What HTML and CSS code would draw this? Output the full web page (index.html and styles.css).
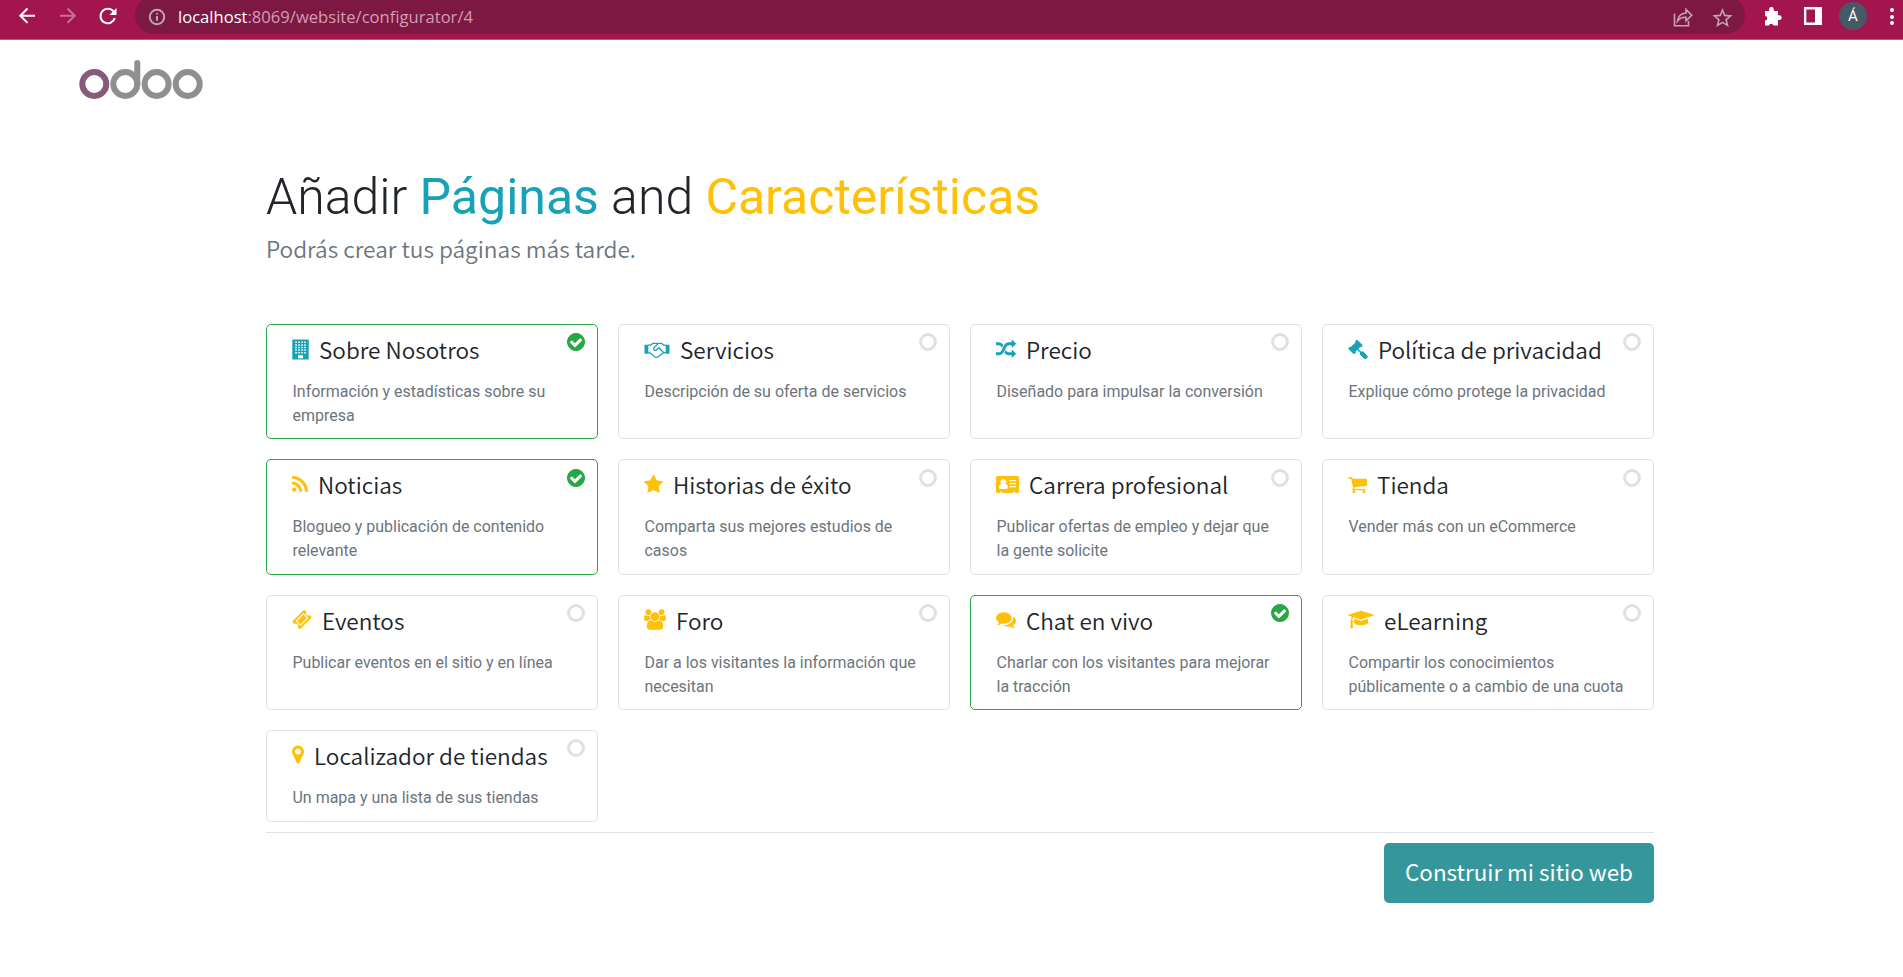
FILE: index.html
```html
<!DOCTYPE html>
<html lang="es">
<head>
<meta charset="utf-8">
<title>Odoo</title>
<link rel="stylesheet" href="styles.css">
</head>
<body>
<svg class="sprite" aria-hidden="true">
  <symbol id="building" viewBox="0 0 17 21"><path d="M.3.500h16.400v20H.3z"/><path fill="none" stroke="#fff" stroke-opacity=".85" stroke-width="1.500" stroke-dasharray="1.900 1.100" d="M3.100 3.300h11M3.100 5.900h11M3.100 8.500h11M3.100 11.100h11M3.100 13.700h11"/><path fill="#fff" d="M6 16.300h5v3H6z"/></symbol>
  <symbol id="handshake" viewBox="0 0 27 20"><path d="M.5 5h4v9.500h-4zM22.500 5h4v9.500h-4z"/><path fill="none" stroke="currentColor" stroke-width="1.300" stroke-linejoin="round" stroke-linecap="round" d="M4.500 5.500h2.300L9 3.700h9.500l2 1.800h2M4.500 13.500h2l4.300 4q1.800 1.300 3.500.2l6-4.500h2.200M14.500 4.200l-4.300 4q-.8 1.600.5 2.500 1.400.7 2.500-.4l2.300-2.100 4.600 4.600"/></symbol>
  <symbol id="random" viewBox="0 0 1792 1792"><path d="M666 481q-60 92-137 273-22-45-37-72.500t-40.500-63.500-51-56.500-63-35-81.500-14.500h-224q-14 0-23-9t-9-23v-192q0-14 9-23t23-9h224q250 0 410 225zm1126 799q0 14-9 23l-320 320q-9 9-23 9-13 0-22.500-9.500t-9.500-22.500v-192q-32 0-85 .5t-81 1-73-1-71-5-64-10.500-63-18.500-58-28.500-59-40-55-53.500-56-69.500q59-93 136-273 22 45 37 72.500t40.500 63.500 51 56.500 63 35 81.500 14.500h256v-192q0-14 9-23t23-9q12 0 24 10l319 319q9 9 9 23zm0-896q0 14-9 23l-320 320q-9 9-23 9-13 0-22.500-9.500t-9.500-22.500v-192h-256q-48 0-87 15t-69 45-51 61.500-45 77.500q-32 62-78 171-29 66-49.500 111t-54 105-64 100-74 83-90 68.500-106.500 42-128 16.500h-224q-14 0-23-9t-9-23v-192q0-14 9-23t23-9h224q48 0 87-15t69-45 51-61.500 45-77.500q32-62 78-171 29-66 49.500-111t54-105 64-100 74-83 90-68.500 106.500-42 128-16.500h256v-192q0-14 9-23t23-9q12 0 24 10l319 319q9 9 9 23z"/></symbol>
  <symbol id="gavel" viewBox="0 0 1792 1792"><path d="M1771 1536q0 53-37 90l-107 108q-39 37-91 37-53 0-90-37l-363-364q-38-36-38-90 0-53 43-96l-256-256-126 126q-14 14-34 14t-34-14q2 2 12.500 12t12.500 13 10 11.500 10 13.500 6 13.500 5.500 16.500 1.500 18q0 38-28 68-3 3-16.500 18t-19 20.500-18.500 16.500-22 15.500-22 9-26 4.500q-40 0-68-28l-408-408q-28-28-28-68 0-13 4.500-26t9-22 15.500-22 16.500-18.500 20.500-19 18-16.500q30-28 68-28 10 0 18 1.500t16.500 5.500 13.500 6 13.500 10 11.500 10 13 12.500 12 12.500q-14-14-14-34t14-34l348-348q14-14 34-14t34 14q-2-2-12.500-12t-12.500-13-10-11.500-10-13.500-6-13.500-5.500-16.500-1.500-18q0-38 28-68 3-3 16.500-18t19-20.500 18.500-16.500 22-15.500 22-9 26-4.500q40 0 68 28l408 408q28 28 28 68 0 13-4.500 26t-9 22-15.500 22-16.500 18.500-20.500 19-18 16.500q-30 28-68 28-10 0-18-1.500t-16.500-5.500-13.500-6-13.500-10-11.500-10-13-12.500-12-12.500q14 14 14 34t-14 34l-126 126 256 256q43-43 96-43 52 0 91 37l363 363q37 39 37 91z"/></symbol>
  <symbol id="rss" viewBox="192 0 1408 1792"><path d="M576 1344q0 80-56 136t-136 56-136-56-56-136 56-136 136-56 136 56 56 136zm512 123q2 28-17 48-18 21-47 21h-135q-25 0-43-16.500t-20-41.500q-22-229-184.500-391.500t-391.500-184.500q-25-2-41.500-20t-16.500-43v-135q0-29 21-47 17-17 43-17h5q160 13 306 80.500t259 181.500q114 113 181.500 259t80.500 306zm512 2q2 27-18 47-18 20-46 20h-143q-26 0-44.500-17.500t-19.500-42.500q-12-215-101-408.500t-231.500-336-336-231.500-408.500-102q-25-1-42.500-19.500t-17.500-43.500v-143q0-28 20-46 18-18 44-18h3q262 13 501.500 120t425.500 294q187 186 294 425.500t120 501.500z"/></symbol>
  <symbol id="star" viewBox="64 0 1664 1792"><path d="M1728 647q0 22-26 48l-363 354 86 500q1 7 1 20 0 21-10.500 35.500t-30.500 14.500q-19 0-40-12l-449-236-449 236q-22 12-40 12-21 0-31.500-14.500t-10.500-35.500q0-6 2-20l86-500-364-354q-25-27-25-48 0-37 56-46l502-73 225-455q19-41 49-41t49 41l225 455 502 73q56 9 56 46z"/></symbol>
  <symbol id="idcard" viewBox="0 0 23 20"><path fill-rule="evenodd" d="M1.500 1.500h20q1.500 0 1.500 1.500v14q0 1.500-1.500 1.500h-2.300v-1.200h-2.400v1.200H6.200v-1.200H3.800v1.200H1.500Q0 18.500 0 17V3q0-1.500 1.500-1.500zM7.400 4.500a2.900 2.900 0 0 0-2 5q-2.400.4-2.400 3.500 0 1.500 1.600 1.500h5.600q1.600 0 1.600-1.500 0-3.100-2.400-3.500a2.900 2.900 0 0 0-2-5zM13.300 5.500v1.300H20V5.500zM13.300 8.500v1.300H20V8.500zM13.300 11.500v1.300H20v-1.300z"/></symbol>
  <symbol id="cart" viewBox="64 0 1664 1792"><path d="M704 1536q0 52-38 90t-90 38-90-38-38-90 38-90 90-38 90 38 38 90zm896 0q0 52-38 90t-90 38-90-38-38-90 38-90 90-38 90 38 38 90zm128-1088v512q0 24-16.500 42.500t-40.500 21.500l-1044 122q13 60 13 70 0 16-24 64h920q26 0 45 19t19 45-19 45-45 19h-1024q-26 0-45-19t-19-45q0-11 8-31.500t16-36 21.500-40 15.500-29.500l-177-823h-204q-26 0-45-19t-19-45 19-45 45-19h256q16 0 28.500 6.500t19.500 15.500 13 24.500 8 26 5.500 29.500 4.500 26h1201q26 0 45 19t19 45z"/></symbol>
  <symbol id="ticket" viewBox="0 0 1792 1792"><path d="M1024 452l316 316-572 572-316-316zm-211 979l618-618q19-19 19-45t-19-45l-362-362q-18-18-45-18t-45 18l-618 618q-19 19-19 45t19 45l362 362q18 18 45 18t45-18zm889-637l-907 908q-37 37-90.500 37t-90.500-37l-126-126q56-56 56-136t-56-136-136-56-136 56l-125-126q-37-37-37-90.500t37-90.500l907-906q37-37 90.500-37t90.500 37l125 125q-56 56-56 136t56 136 136 56 136-56l126 125q37 37 37 90.500t-37 90.500z"/></symbol>
  <symbol id="users" viewBox="64 0 1920 1792"><path d="M657 896q-162 5-265 128h-134q-82 0-138-40.500t-56-118.500q0-353 124-353 6 0 43.500 21t97.500 42.500 119 21.500q67 0 133-23-5 37-5 66 0 139 81 256zm1071 637q0 120-73 189.500t-194 69.500h-874q-121 0-194-69.500t-73-189.500q0-53 3.500-103.500t14-109 26.500-108.500 43-97.500 62-81 85.500-53.500 111.500-20q10 0 43 21.500t73 48 107 48 135 21.500 135-21.500 107-48 73-48 43-21.500q61 0 111.500 20t85.500 53.500 62 81 43 97.500 26.500 108.500 14 109 3.500 103.500zm-1024-1277q0 106-75 181t-181 75-181-75-75-181 75-181 181-75 181 75 75 181zm704 384q0 159-112.500 271.500t-271.500 112.500-271.500-112.500-112.500-271.500 112.500-271.500 271.500-112.500 271.500 112.500 112.500 271.500zm576 225q0 78-56 118.500t-138 40.500h-134q-103-123-265-128 81-117 81-256 0-29-5-66 66 23 133 23 59 0 119-21.500t97.500-42.500 43.500-21q124 0 124 353zm-128-609q0 106-75 181t-181 75-181-75-75-181 75-181 181-75 181 75 75 181z"/></symbol>
  <symbol id="comments" viewBox="0 0 1792 1792"><path d="M1408 768q0 139-94 257t-256.500 186.500-353.500 68.500q-86 0-176-16-124 88-278 128-36 9-86 16h-3q-11 0-20.500-8t-11.500-21q-1-3-1-6.500t.5-6.500 2-6l2.500-5 3.500-5.500 4-5 4.500-5 4-4.500q5-6 23-25t26-29.500 22.500-29 25-38.500 20.500-44q-124-72-195-177t-71-224q0-139 94-257t256.500-186.500 353.500-68.500 353.500 68.500 256.500 186.500 94 257zm384 256q0 120-71 224.500t-195 176.500q10 24 20.500 44t25 38.500 22.500 29 26 29.500 23 25q1 1 4 4.500t4.500 5 4 5 3.500 5.500l2.500 5 2 6 .5 6.500-1 6.500q-3 14-13 22t-22 7q-50-7-86-16-154-40-278-128-90 16-176 16-271 0-472-132 58 4 88 4 161 0 309-45t264-129q125-92 192-212t67-254q0-77-23-152 129 71 204 178t75 230z"/></symbol>
  <symbol id="grad" viewBox="0 0 2304 1792"><path d="M1774 836l18 316q4 69-82 128t-235 93.500-323 34.500-323-34.500-235-93.500-82-128l18-316 574 181q22 7 48 7t48-7zm530-324q0 23-22 31l-1120 352q-4 1-10 1t-10-1l-652-206q-43 34-71 111.500t-34 178.500q63 36 63 109 0 69-58 107l58 433q2 14-8 25-9 11-24 11h-192q-15 0-24-11-10-11-8-25l58-433q-58-38-58-107 0-73 65-111 11-207 98-330l-333-104q-22-8-22-31t22-31l1120-352q4-1 10-1t10 1l1120 352q22 8 22 31z"/></symbol>
  <symbol id="marker" viewBox="384 0 1024 1792"><path d="M1152 640q0-106-75-181t-181-75-181 75-75 181 75 181 181 75 181-75 75-181zm256 0q0 109-33 179l-364 774q-16 33-47.500 52t-67.500 19-67.500-19-46.500-52l-365-774q-33-70-33-179 0-212 150-362t362-150 362 150 150 362z"/></symbol>
  <symbol id="check" viewBox="128 128 1536 1536"><path d="M1412 734q0-28-18-46l-91-90q-19-19-45-19t-45 19l-408 407-226-226q-19-19-45-19t-45 19l-91 90q-18 18-18 46 0 27 18 45l362 362q19 19 45 19 27 0 46-19l543-543q18-18 18-45zm252 162q0 209-103 385.500t-279.500 279.500-385.500 103-385.500-103-279.500-279.500-103-385.500 103-385.500 279.500-279.500 385.500-103 385.500 103 279.500 279.500 103 385.500z"/></symbol>
</svg>

<div class="browser">
  <svg class="nav" width="120" height="32" viewBox="0 0 120 32">
    <path class="line" d="M35 15.700H20.500M27.500 8.500l-7.200 7.200 7.200 7.200"/>
    <path class="line dim" d="M60 15.700h14.500M67.500 8.500l7.200 7.200-7.200 7.200"/>
    <path class="line" d="M113.500 11.500A7.300 7.300 0 1 0 114.800 18"/><path fill="#fff" d="M116.500 8v7h-7z"/>
  </svg>
  <div class="omnibox">
    <svg class="info" width="18" height="18" viewBox="0 0 18 18"><circle cx="9" cy="9" r="7.200"/><path d="M9 8v4.700M9 5v1.600"/></svg>
    <div class="url"><b>localhost</b>:8069/website/configurator/4</div>
    <svg class="omni-icons" width="60" height="24" viewBox="0 0 60 24">
      <path d="M1.500 9.500v12.300h14V17M4.500 17q1-7.500 8.500-8V5.500l5.700 5.700-5.700 5.600v-3.500q-5.500-.3-8.500 3.700z"/>
      <path d="M49.500 6l2.200 5.400 5.900.5-4.500 3.800 1.400 5.700-5-3-5 3 1.400-5.700-4.500-3.800 5.900-.5z"/>
    </svg>
  </div>
  <svg class="ext" width="58" height="24" viewBox="0 0 58 24">
    <path fill="#fff" d="M1 8h4V6.500a2.400 2.400 0 0 1 4.800 0V8h4.200v4.300h1.300a2.300 2.300 0 0 1 0 4.700h-1.300v5.500H9.500a2.400 2.400 0 0 0-4.600 0H1V17.500a2.300 2.300 0 0 0 0-4.600z"/>
    <path fill="#fff" fill-rule="evenodd" d="M40 4h18v18H40zM42.300 6.500v13h8.700v-13z"/>
  </svg>
  <div class="avatar">Á</div>
  <div class="dots"><i></i><i></i><i></i></div>
</div>

<header class="top">
  <svg class="logo" width="126" height="42" viewBox="0 0 126 42">
    <circle class="ring plum" cx="16.300" cy="25" r="12"/>
    <circle class="ring" cx="47.300" cy="25" r="12"/><path class="ring" stroke-linecap="round" d="M59.300 25V4"/>
    <circle class="ring" cx="78.600" cy="25" r="12"/>
    <circle class="ring" cx="109.700" cy="25" r="12"/>
  </svg>
</header>

<main class="page">
  <h1>Añadir <span class="teal">Páginas</span> and <span class="amber">Características</span></h1>
  <p class="lead">Podrás crear tus páginas más tarde.</p>

  <section class="grid">
    <article class="card on"><h2><svg class="teal" width="17" height="21"><use href="#building"/></svg>Sobre Nosotros</h2><p>Información y estadísticas sobre su empresa</p><svg class="tick"><use href="#check"/></svg></article>
    <article class="card"><h2><svg class="teal" width="26" height="21"><use href="#handshake"/></svg>Servicios</h2><p>Descripción de su oferta de servicios</p><i class="radio"></i></article>
    <article class="card"><h2><svg class="teal" width="20" height="21"><use href="#random"/></svg>Precio</h2><p>Diseñado para impulsar la conversión</p><i class="radio"></i></article>
    <article class="card"><h2><svg class="teal" width="20" height="21"><use href="#gavel"/></svg>Política de privacidad</h2><p>Explique cómo protege la privacidad</p><i class="radio"></i></article>

    <article class="card on"><h2><svg class="amber" width="16" height="21"><use href="#rss"/></svg>Noticias</h2><p>Blogueo y publicación de contenido relevante</p><svg class="tick"><use href="#check"/></svg></article>
    <article class="card"><h2><svg class="amber" width="19" height="21"><use href="#star"/></svg>Historias de éxito</h2><p>Comparta sus mejores estudios de casos</p><i class="radio"></i></article>
    <article class="card"><h2><svg class="amber" width="23" height="21"><use href="#idcard"/></svg>Carrera profesional</h2><p>Publicar ofertas de empleo y dejar que la gente solicite</p><i class="radio"></i></article>
    <article class="card"><h2><svg class="amber" width="19" height="21"><use href="#cart"/></svg>Tienda</h2><p>Vender más con un eCommerce</p><i class="radio"></i></article>

    <article class="card"><h2><svg class="amber" width="20" height="21"><use href="#ticket"/></svg>Eventos</h2><p>Publicar eventos en el sitio y en línea</p><i class="radio"></i></article>
    <article class="card"><h2><svg class="amber" width="22" height="21"><use href="#users"/></svg>Foro</h2><p>Dar a los visitantes la información que necesitan</p><i class="radio"></i></article>
    <article class="card on"><h2><svg class="amber" width="20" height="21"><use href="#comments"/></svg>Chat en vivo</h2><p>Charlar con los visitantes para mejorar la tracción</p><svg class="tick"><use href="#check"/></svg></article>
    <article class="card"><h2><svg class="amber" width="26" height="21"><use href="#grad"/></svg>eLearning</h2><p>Compartir los conocimientos públicamente o a cambio de una cuota</p><i class="radio"></i></article>

    <article class="card"><h2><svg class="amber" width="12" height="21"><use href="#marker"/></svg>Localizador de tiendas</h2><p>Un mapa y una lista de sus tiendas</p><i class="radio"></i></article>
  </section>

  <footer class="actions"><button class="build">Construir mi sitio web</button></footer>
</main>
</body>
</html>
```
FILE: styles.css
```css
* { box-sizing: border-box; }
body { margin: 0; background: #fff; color: #212529; font-family: Roboto, sans-serif; height: 977px; overflow: hidden; }
.sprite { position: absolute; width: 0; height: 0; }
svg { fill: currentColor; flex: none; }

.browser { display: flex; height: 40px; background: #a3154f; border-bottom: 1px solid #bf5580; overflow: hidden; }
.nav { margin-right: 15px; }
.line { fill: none; stroke: #fff; stroke-width: 2; }
.dim { stroke: #cb7095; }
.omnibox { display: flex; align-items: center; width: 1610px; height: 38px; margin-top: -4px; padding: 4px 12px 0 13px; border-radius: 19px; background: #7d1842; }
.info { fill: none; stroke: #b8abb1; stroke-width: 2; }
.url { flex: 1; margin-left: 12px; color: #d29db4; font: 16.600px/24px "Open Sans", "Noto Sans", sans-serif; white-space: nowrap; }
.url b { color: #fff; font-weight: 400; }
.omni-icons { margin-top: -3px; fill: none; stroke: #c3a5b2; stroke-width: 1.600; }
.ext { margin: 3px 0 0 19px; }
.avatar { width: 28px; height: 28px; margin: 2px 0 0 17px; border-radius: 50%; background: #455a64; color: #fff; font: 15px/29px Roboto, sans-serif; text-align: center; }
.dots { display: flex; flex-direction: column; gap: 2.500px; margin: 8px 0 0 23px; }
.dots i { width: 4px; height: 4px; border-radius: 50%; background: #fff; }

.top { height: 127px; padding: 19px 0 0 78px; }
.ring { fill: none; stroke: #8f8f8f; stroke-width: 6; }
.plum { stroke: #875a7b; }

.page { width: 1388px; margin-left: 266px; }
h1 { margin: 0; font-size: 50px; line-height: 60px; font-weight: 300; white-space: nowrap; }
h1 span { font-weight: 400; }
.teal { color: #17a2b8; }
.amber { color: #ffc107; }
.lead { margin: 4px 0 0; color: #6c757d; font: 350 22.650px/36px "Noto Sans CJK SC", sans-serif; }

.grid { display: grid; grid-template-columns: repeat(4, 332px); grid-template-rows: repeat(3, 115.300px) 92px; gap: 20px; margin-top: 57px; }
.card { position: relative; padding: 9px 25px 0 25.500px; border: 1px solid #dee2e6; border-radius: 5px; }
.card.on { border-color: #28a745; }
.card h2 { display: flex; align-items: center; gap: 10.500px; height: 30px; margin: 0 0 0 -1px; font: 350 22.550px/30px "Noto Sans CJK SC", sans-serif; white-space: nowrap; }
.card p { margin: 16px 0 0; color: #6c757d; font-size: 15.970px; line-height: 24px; font-weight: 400; }
.radio, .tick { position: absolute; top: 8.300px; right: 12px; width: 18px; height: 18px; }
.radio { border: 3px solid #dee2e6; border-radius: 50%; }
.tick { color: #28a745; }

.actions { display: flex; justify-content: flex-end; margin-top: 10px; padding-top: 10px; border-top: 1px solid #dee2e6; }
.build { width: 270px; height: 60px; padding: 0 0 4px; border: 0; border-radius: 5px; background: #35979c; color: #fff; font: 400 22.400px/56px "Noto Sans CJK SC", sans-serif; }
```
